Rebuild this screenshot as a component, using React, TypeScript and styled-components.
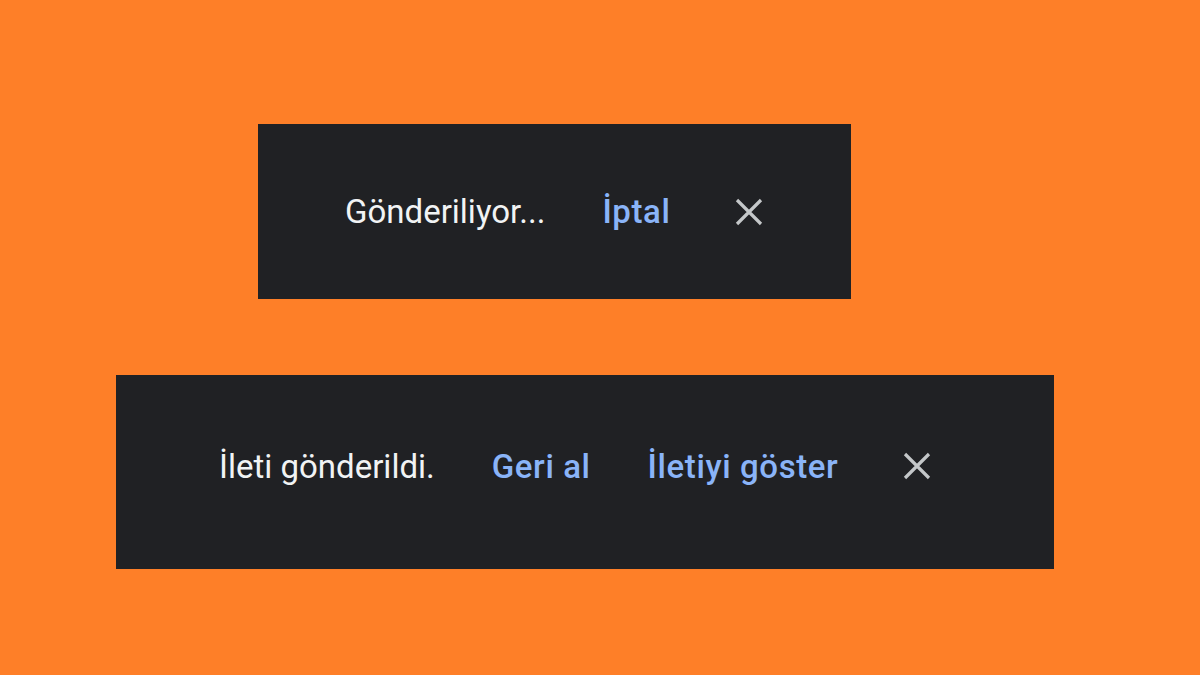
import React from "react";
import styled, { createGlobalStyle } from "styled-components";

const GlobalStyle = createGlobalStyle`
    html, body {
        margin: 0;
        padding: 0;
        background: #fe7f28;
    }

    body {
        font-family: Roboto, "Liberation Sans", sans-serif;
    }
`;

const Page = styled.div`
    width: 1200px;
    height: 675px;
    box-sizing: border-box;
    padding-top: 124px;
    display: flex;
    flex-direction: column;
    align-items: flex-start;
    gap: 76px;
    background: #fe7f28;
`;

const Snackbar = styled.div<{ $offset: number; $width: number; $height: number; $padLeft: number; $lift?: number }>`
    margin-left: ${(p) => p.$offset}px;
    width: ${(p) => p.$width}px;
    height: ${(p) => p.$height}px;
    box-sizing: border-box;
    padding-left: ${(p) => p.$padLeft}px;
    padding-bottom: ${(p) => p.$lift ?? 0}px;
    background: #202124;
    display: flex;
    align-items: center;
    gap: 57px;
`;

const Message = styled.span`
    color: #f1f3f4;
    font-size: 33px;
    font-weight: 400;
    white-space: nowrap;
`;

const Action = styled.button`
    all: unset;
    color: #8ab4f8;
    font-family: Roboto, "Liberation Sans", sans-serif;
    font-size: 33px;
    font-weight: 500;
    letter-spacing: 0.6px;
    white-space: nowrap;
    cursor: pointer;
`;

const CloseButton = styled.button`
    all: unset;
    margin-left: 8px;
    width: 28px;
    height: 28px;
    display: flex;
    align-items: center;
    justify-content: center;
    cursor: pointer;
`;

const CloseIcon = () => (
    <svg width="28" height="28" viewBox="0 0 28 28">
        <path d="M2 2 L26 26 M26 2 L2 26" stroke="#c4c7c9" strokeWidth="3.2" fill="none" />
    </svg>
);

export default function App() {
    return (
        <>
            <GlobalStyle />
            <Page>
                <Snackbar $offset={258} $width={593} $height={175} $padLeft={87}>
                    <Message>Gönderiliyor...</Message>
                    <Action>İptal</Action>
                    <CloseButton aria-label="Kapat">
                        <CloseIcon />
                    </CloseButton>
                </Snackbar>
                <Snackbar $offset={116} $width={938} $height={194} $padLeft={103} $lift={12}>
                    <Message>İleti gönderildi.</Message>
                    <Action>Geri al</Action>
                    <Action>İletiyi göster</Action>
                    <CloseButton aria-label="Kapat">
                        <CloseIcon />
                    </CloseButton>
                </Snackbar>
            </Page>
        </>
    );
}
